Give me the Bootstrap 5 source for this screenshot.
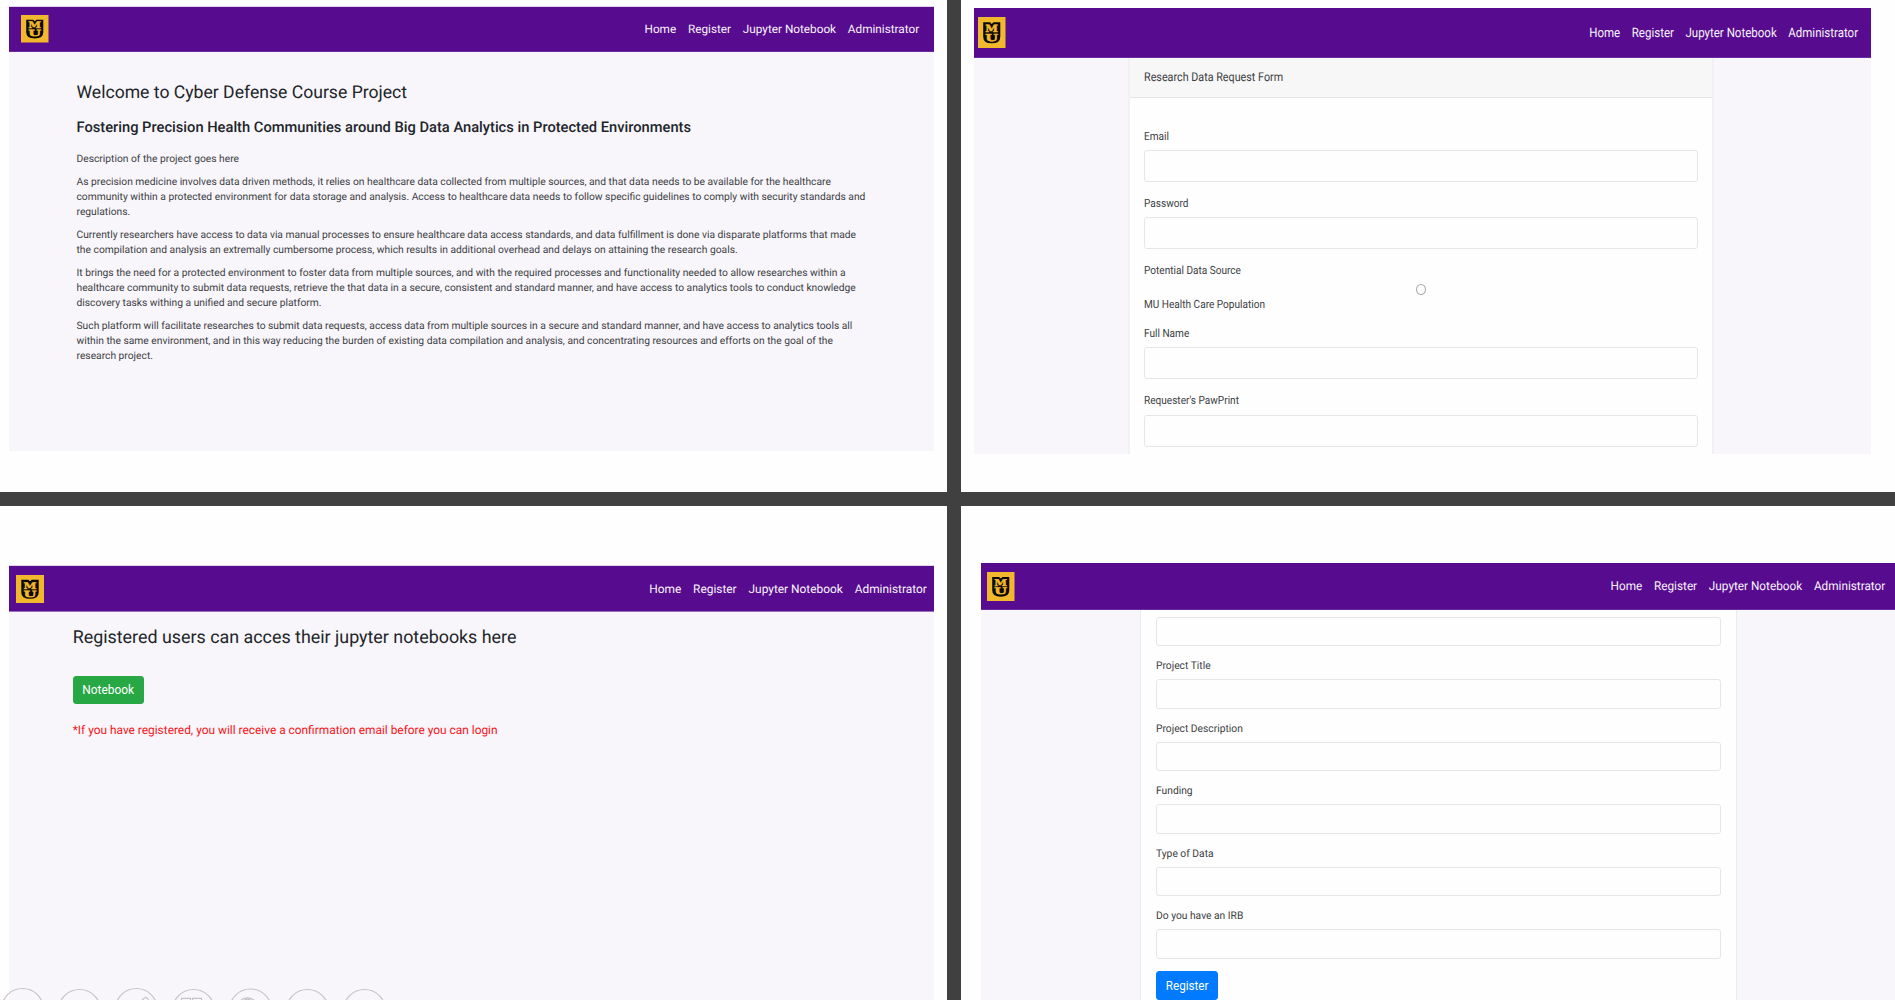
<!DOCTYPE html>
<html lang="en">
<head>
<meta charset="utf-8">
<meta name="viewport" content="width=device-width, initial-scale=1">
<title>Cyber Defense Course Project</title>
<link href="https://cdn.jsdelivr.net/npm/bootstrap@5.3.0/dist/css/bootstrap.min.css" rel="stylesheet">
<style>
  html, body { height: 1000px; overflow: hidden; }
  body { font-family: Roboto, "Liberation Sans", sans-serif; text-rendering: geometricPrecision; color: #3c4043; background: #404040; }
  .board { width: 1895px; height: 1000px; display: grid; grid-template-columns: 947px 934px; grid-template-rows: 492px 494px; gap: 14px; }
  .pane { background: #fefefe; overflow: hidden; position: relative; }
  .screen { --sx: 1; background: #f8f6fb; overflow: hidden; display: flex; flex-direction: column; }
  .squeeze { display: inline-block; transform: scaleX(var(--sx)); transform-origin: 0 50%; white-space: nowrap; }
  .topbar { background: #570b8f; border-bottom: 1px solid #6b2a9d; flex: none; padding: 0; flex-wrap: nowrap; }
  .topbar .navbar-nav { gap: var(--gap); transform: scaleX(var(--sx)); transform-origin: 100% 50%; }
  .topbar .nav-link { color: #f8f4fb; padding: 0; line-height: 20px; white-space: nowrap; }
  .crest { display: block; flex: none; }
  .crest text { font-family: "DejaVu Serif", serif; font-weight: 700; fill: #f1b82d; stroke: #f1b82d; stroke-width: .45px; }

  .home { margin: 6px 0 0 9px; width: 925px; height: 445px; }
  .home .topbar { --gap: 11.77px; height: 46px; padding: 0 14.8px 0 12px; font-size: 11.77px; border-top: 1px solid #ddd4e6; }
  .intro { padding: 31px 67.5px 0; font-size: 10.27px; line-height: 14.67px; }
  .intro h2 { font-size: 17.6px; font-weight: 400; line-height: 20px; margin: 0 0 14px; color: #212529; }
  .intro h3 { font-size: 14.68px; font-weight: 500; line-height: 20px; margin: 0 0 14.8px; color: #212529; }
  .intro p { margin: 0 0 8.83px; }

  .request { --sx: .89; margin: 8px 0 0 13px; width: 897px; height: 446px; }
  .request .topbar { --gap: 12.95px; height: 50px; padding: 0 12.5px 0 4.4px; font-size: 12.95px; }
  .request .topbar .navbar-nav { padding-top: 2.4px; }
  .request .sheet { width: 586px; margin-left: 154px; border-color: #f1f0f4; border-width: 0 2px 0 2px; border-style: solid; }
  .request .card-header { background: #f7f7f7; border-bottom: 1px solid #e4e4e7; height: 40px; padding: 0 14.3px; font-size: 12.1px; line-height: 38px; flex: none; }
  .request form { padding: 22.5px 14px 0; }
  .request .form-label { height: 29.4px; line-height: 30.4px; font-size: 11.32px; }
  .request .form-control { height: 32px; margin-bottom: 6px; }

  .notebook { margin: 59px 0 0 9px; width: 925px; height: 435px; }
  .notebook .topbar { --gap: 11.9px; height: 47px; padding: 0 7.2px 0 7.2px; font-size: 11.9px; border-top: 1px solid #ddd4e6; border-bottom-color: #9a6fbb; }
  .access { padding: 16px 63.7px; }
  .access h2 { font-size: 17.86px; font-weight: 400; line-height: 20px; margin: 0 0 28px; color: #212529; }
  .access .btn { display: block; width: 71px; height: 28px; padding: 0; font-size: 11.9px; line-height: 27px; border-radius: 3px; background: #28a745; border-color: #28a745; margin-bottom: 15.6px; }
  .access p { font-size: 11.9px; line-height: 20px; color: #f91419; margin: 0; }

  .project { --sx: .963; margin: 57px 0 0 20px; width: 914px; height: 437px; }
  .project .topbar { --gap: 12.22px; height: 47px; padding: 0 10.2px 0 6px; font-size: 12.22px; }
  .project .sheet { width: 597px; margin-left: 159px; border: solid #ebebee; border-width: 0 1px; }
  .project form { padding: 7px 15px 0; }
  .project .form-label { height: 28px; line-height: 29.6px; font-size: 10.66px; margin-top: 5.1px; }
  .project .form-control { height: 29.4px; }
  .project .btn { display: block; width: 62px; height: 29px; padding: 0; font-size: 12.1px; line-height: 28px; border-radius: 3px; background: #007bff; border-color: #007bff; margin-top: 12px; }
  .project .btn .squeeze { transform-origin: 50% 50%; }

  .sheet { flex: 1 0 auto; border-radius: 0; background: #fefefe; color: #3c4043; }
  .form-label { display: block; margin: 0; }
  .form-control { display: block; width: 100%; min-height: 0; padding: 0 8px; font-size: 11px; border: 1px solid #e6e6e9; border-radius: 3px; background: #fefefe; }
  .source .form-check-input { display: block; float: none; width: 10px; height: 11px; margin: -.5px auto -6.5px; border: 1px solid #aaa; background: #fefefe; }
  .tools { position: absolute; left: 0; bottom: 0; display: block; }
</style>
<script src="https://cdn.jsdelivr.net/npm/bootstrap@5.3.0/dist/js/bootstrap.bundle.min.js"></script>
</head>
<body>
<main class="board">
  <section class="pane">
    <div class="screen home">
      <nav class="navbar topbar d-flex align-items-center justify-content-between">
        <svg class="crest" width="27.5" height="27.5" viewBox="0 0 28 28" preserveAspectRatio="none">
          <rect width="28" height="28" fill="#f1b82d"/>
          <path d="M5.3 4.8H12.3L14 6.3 15.7 4.8H22.7V17.5Q22.7 23.8 14 23.8T5.3 17.5Z" fill="#0b0a08"/>
          <text x="7.5" y="13.5" font-size="9" textLength="13" lengthAdjust="spacingAndGlyphs">M</text>
          <text x="7.5" y="21.5" font-size="8.6" textLength="13" lengthAdjust="spacingAndGlyphs">U</text>
        </svg>
        <div class="navbar-nav flex-row">
          <a class="nav-link">Home</a><a class="nav-link">Register</a><a class="nav-link">Jupyter Notebook</a><a class="nav-link">Administrator</a>
        </div>
      </nav>
      <div class="intro">
        <h2>Welcome to Cyber Defense Course Project</h2>
        <h3>Fostering Precision Health Communities around Big Data Analytics in Protected Environments</h3>
        <p>Description of the project goes here</p>
        <p>As precision medicine involves data driven methods, it relies on healthcare data collected from multiple sources, and that data needs to be available for the healthcare community within a protected environment for data storage and analysis. Access to healthcare data needs to follow specific guidelines to comply with security standards and regulations.</p>
        <p>Currently researchers have access to data via manual processes to ensure healthcare data access standards, and data fulfillment is done via disparate platforms that made the compilation and analysis an extremally cumbersome process, which results in additional overhead and delays on attaining the research goals.</p>
        <p>It brings the need for a protected environment to foster data from multiple sources, and with the required processes and functionality needed to allow researches within a healthcare community to submit data requests, retrieve the that data in a secure, consistent and standard manner, and have access to analytics tools to conduct knowledge discovery tasks withing a unified and secure platform.</p>
        <p>Such platform will facilitate researches to submit data requests, access data from multiple sources in a secure and standard manner, and have access to analytics tools all within the same environment, and in this way reducing the burden of existing data compilation and analysis, and concentrating resources and efforts on the goal of the research project.</p>
      </div>
    </div>
  </section>

  <section class="pane">
    <div class="screen request">
      <nav class="navbar topbar d-flex align-items-center justify-content-between">
        <svg class="crest" width="27.5" height="31" viewBox="0 0 28 28" preserveAspectRatio="none">
          <rect width="28" height="28" fill="#f1b82d"/>
          <path d="M5.3 4.8H12.3L14 6.3 15.7 4.8H22.7V17.5Q22.7 23.8 14 23.8T5.3 17.5Z" fill="#0b0a08"/>
          <text x="7.5" y="13.5" font-size="9" textLength="13" lengthAdjust="spacingAndGlyphs">M</text>
          <text x="7.5" y="21.5" font-size="8.6" textLength="13" lengthAdjust="spacingAndGlyphs">U</text>
        </svg>
        <div class="navbar-nav flex-row">
          <a class="nav-link">Home</a><a class="nav-link">Register</a><a class="nav-link">Jupyter Notebook</a><a class="nav-link">Administrator</a>
        </div>
      </nav>
      <div class="card sheet">
        <div class="card-header rounded-0"><span class="squeeze">Research Data Request Form</span></div>
        <form>
          <label class="form-label"><span class="squeeze">Email</span></label>
          <input class="form-control" type="email">
          <label class="form-label"><span class="squeeze">Password</span></label>
          <input class="form-control" type="password">
          <div class="source">
            <label class="form-label"><span class="squeeze">Potential Data Source</span></label>
            <input class="form-check-input" type="radio">
            <label class="form-label"><span class="squeeze">MU Health Care Population</span></label>
            <label class="form-label"><span class="squeeze">Full Name</span></label>
          </div>
          <input class="form-control" type="text">
          <label class="form-label"><span class="squeeze">Requester's PawPrint</span></label>
          <input class="form-control" type="text">
        </form>
      </div>
    </div>
  </section>

  <section class="pane">
    <div class="screen notebook">
      <nav class="navbar topbar d-flex align-items-center justify-content-between">
        <svg class="crest" width="28" height="28" viewBox="0 0 28 28" preserveAspectRatio="none">
          <rect width="28" height="28" fill="#f1b82d"/>
          <path d="M5.3 4.8H12.3L14 6.3 15.7 4.8H22.7V17.5Q22.7 23.8 14 23.8T5.3 17.5Z" fill="#0b0a08"/>
          <text x="7.5" y="13.5" font-size="9" textLength="13" lengthAdjust="spacingAndGlyphs">M</text>
          <text x="7.5" y="21.5" font-size="8.6" textLength="13" lengthAdjust="spacingAndGlyphs">U</text>
        </svg>
        <div class="navbar-nav flex-row">
          <a class="nav-link">Home</a><a class="nav-link">Register</a><a class="nav-link">Jupyter Notebook</a><a class="nav-link">Administrator</a>
        </div>
      </nav>
      <div class="access">
        <h2>Registered users can acces their jupyter notebooks here</h2>
        <button class="btn btn-success" type="button">Notebook</button>
        <p>*If you have registered, you will receive a confirmation email before you can login</p>
      </div>
    </div>
    <!-- slideshow controls peeking over the bottom edge -->
    <svg class="tools" width="400" height="14" viewBox="0 0 400 14" fill="none" stroke="#c6c3c8" stroke-width="1.2">
      <circle cx="22.5" cy="23.5" r="21"/><circle cx="79.5" cy="24.5" r="21"/><circle cx="136.3" cy="23.5" r="21"/><circle cx="193.5" cy="24.5" r="21"/><circle cx="250.5" cy="24" r="21"/><circle cx="307.5" cy="24.5" r="21"/><circle cx="364.5" cy="24.5" r="21"/>
      <path d="M142 14L145.3 11.5Q147 10.8 148.5 14"/>
      <path d="M181.5 14V12.3H190.5V14M192.5 14V12.3H201.5V14"/>
      <path d="M241 14Q247.5 9.5 254 14M244 14.2Q247.5 12 251 14.2"/>
    </svg>
  </section>

  <section class="pane">
    <div class="screen project">
      <nav class="navbar topbar d-flex align-items-center justify-content-between">
        <svg class="crest" width="27.5" height="29" viewBox="0 0 28 28" preserveAspectRatio="none">
          <rect width="28" height="28" fill="#f1b82d"/>
          <path d="M5.3 4.8H12.3L14 6.3 15.7 4.8H22.7V17.5Q22.7 23.8 14 23.8T5.3 17.5Z" fill="#0b0a08"/>
          <text x="7.5" y="13.5" font-size="9" textLength="13" lengthAdjust="spacingAndGlyphs">M</text>
          <text x="7.5" y="21.5" font-size="8.6" textLength="13" lengthAdjust="spacingAndGlyphs">U</text>
        </svg>
        <div class="navbar-nav flex-row">
          <a class="nav-link">Home</a><a class="nav-link">Register</a><a class="nav-link">Jupyter Notebook</a><a class="nav-link">Administrator</a>
        </div>
      </nav>
      <div class="card sheet">
        <form>
          <input class="form-control" type="text">
          <label class="form-label"><span class="squeeze">Project Title</span></label>
          <input class="form-control" type="text">
          <label class="form-label"><span class="squeeze">Project Description</span></label>
          <input class="form-control" type="text">
          <label class="form-label"><span class="squeeze">Funding</span></label>
          <input class="form-control" type="text">
          <label class="form-label"><span class="squeeze">Type of Data</span></label>
          <input class="form-control" type="text">
          <label class="form-label"><span class="squeeze">Do you have an IRB</span></label>
          <input class="form-control" type="text">
          <button class="btn btn-primary" type="button"><span class="squeeze">Register</span></button>
        </form>
      </div>
    </div>
  </section>
</main>
</body>
</html>
